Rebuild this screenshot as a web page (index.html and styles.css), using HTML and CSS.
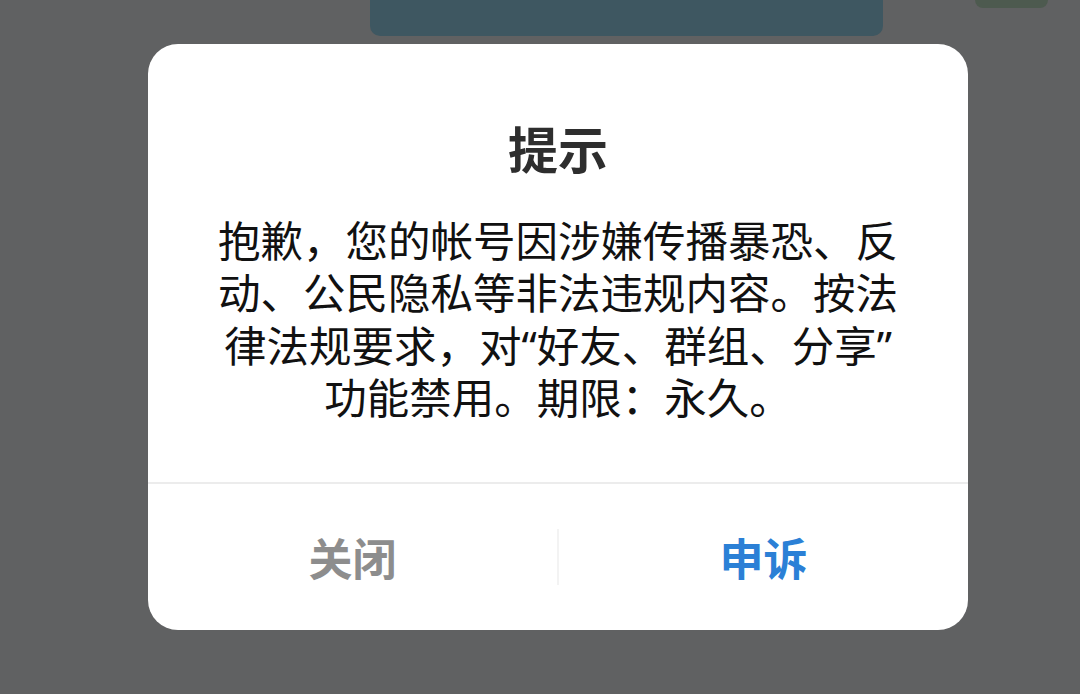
FILE: index.html
```html
<!DOCTYPE html>
<html lang="zh-CN">
<head>
<meta charset="utf-8">
<title>提示</title>
<link rel="stylesheet" href="styles.css">
</head>
<body>
<div class="screen">
  <div class="top-row">
    <div class="bubble"></div>
    <div class="avatar"></div>
  </div>
</div>
<div class="overlay">
  <div class="dialog">
    <div class="content">
      <h1 class="title">提示</h1>
      <p class="message">抱歉，您的帐号因涉嫌传播暴恐、反动、公民隐私等非法违规内容。按法律法规要求，对“好友、群组、分享”功能禁用。期限：永久。</p>
    </div>
    <div class="actions">
      <button class="btn btn-close">关闭</button>
      <span class="sep"></span>
      <button class="btn btn-appeal">申诉</button>
    </div>
  </div>
</div>
</body>
</html>
```

FILE: styles.css
```css
html, body {
  margin: 0;
  padding: 0;
}
body {
  width: 1080px;
  height: 694px;
  overflow: hidden;
  background: #606162;
  position: relative;
  font-family: "Noto Sans CJK SC", "Noto Sans", sans-serif;
}
.screen {
  height: 100%;
}
.top-row {
  display: flex;
  align-items: flex-start;
}
.bubble {
  margin-left: 370px;
  width: 513px;
  height: 36px;
  background: #3e5761;
  border-radius: 0 0 10px 10px;
}
.avatar {
  margin-left: 92px;
  width: 73px;
  height: 8px;
  background: #4d5a4f;
  border-radius: 0 0 12px 12px;
}
.overlay {
  position: absolute;
  inset: 0;
  padding: 44px 0 0 148px;
  box-sizing: border-box;
}
.dialog {
  width: 820px;
  height: 586px;
  background: #ffffff;
  border-radius: 30px;
  display: flex;
  flex-direction: column;
}
.content {
  padding: 73px 60px 0;
  height: 440px;
  flex-shrink: 0;
  box-sizing: border-box;
  border-bottom: 2px solid #ececec;
  text-align: center;
}
.title {
  margin: 0;
  font-size: 50px;
  line-height: 60px;
  font-weight: 700;
  color: #2e2e2e;
}
.message {
  margin: 38px 0 0;
  font-family: "Noto Sans", "Noto Sans CJK SC", sans-serif;
  font-size: 42.5px;
  line-height: 52.4px;
  font-weight: 400;
  color: #111111;
}
.actions {
  flex: 1;
  display: flex;
  align-items: center;
}
.btn {
  flex: 1;
  height: 100%;
  border: 0;
  background: transparent;
  font-family: inherit;
  font-size: 44px;
  font-weight: 700;
  padding: 0;
}
.btn-close {
  color: #8d8d8d;
}
.btn-appeal {
  color: #2b80d6;
}
.sep {
  width: 2px;
  height: 56px;
  background: #f3f3f3;
}
```
